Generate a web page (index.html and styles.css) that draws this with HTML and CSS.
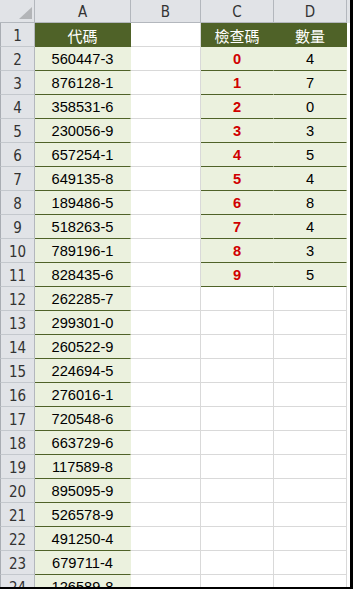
FILE: index.html
```html
<!DOCTYPE html>
<html>
<head>
<meta charset="utf-8">
<link rel="stylesheet" href="styles.css">
</head>
<body>
<div class="sheet">
  <div class="c hd corner"><svg width="34" height="22" viewBox="0 0 34 22"><polygon points="32,7 32,19 19,19" fill="#b3b5b8"/></svg></div>
  <div class="c hd">A</div><div class="c hd">B</div><div class="c hd">C</div><div class="c hd">D</div><div class="c hd pad"></div>

  <div class="c rn">1</div><div class="c a a1">代碼</div><div class="c b"></div><div class="c t t1">檢查碼</div><div class="c t t1">數量</div><div class="c pad"></div>
  <div class="c rn">2</div><div class="c a">560447-3</div><div class="c b"></div><div class="c t red">0</div><div class="c t">4</div><div class="c pad"></div>
  <div class="c rn">3</div><div class="c a">876128-1</div><div class="c b"></div><div class="c t red">1</div><div class="c t">7</div><div class="c pad"></div>
  <div class="c rn">4</div><div class="c a">358531-6</div><div class="c b"></div><div class="c t red">2</div><div class="c t">0</div><div class="c pad"></div>
  <div class="c rn">5</div><div class="c a">230056-9</div><div class="c b"></div><div class="c t red">3</div><div class="c t">3</div><div class="c pad"></div>
  <div class="c rn">6</div><div class="c a">657254-1</div><div class="c b"></div><div class="c t red">4</div><div class="c t">5</div><div class="c pad"></div>
  <div class="c rn">7</div><div class="c a">649135-8</div><div class="c b"></div><div class="c t red">5</div><div class="c t">4</div><div class="c pad"></div>
  <div class="c rn">8</div><div class="c a">189486-5</div><div class="c b"></div><div class="c t red">6</div><div class="c t">8</div><div class="c pad"></div>
  <div class="c rn">9</div><div class="c a">518263-5</div><div class="c b"></div><div class="c t red">7</div><div class="c t">4</div><div class="c pad"></div>
  <div class="c rn">10</div><div class="c a">789196-1</div><div class="c b"></div><div class="c t red">8</div><div class="c t">3</div><div class="c pad"></div>
  <div class="c rn">11</div><div class="c a">828435-6</div><div class="c b"></div><div class="c t red">9</div><div class="c t">5</div><div class="c pad"></div>
  <div class="c rn">12</div><div class="c a">262285-7</div><div class="c b"></div><div class="c b"></div><div class="c b"></div><div class="c pad"></div>
  <div class="c rn">13</div><div class="c a">299301-0</div><div class="c b"></div><div class="c b"></div><div class="c b"></div><div class="c pad"></div>
  <div class="c rn">14</div><div class="c a">260522-9</div><div class="c b"></div><div class="c b"></div><div class="c b"></div><div class="c pad"></div>
  <div class="c rn">15</div><div class="c a">224694-5</div><div class="c b"></div><div class="c b"></div><div class="c b"></div><div class="c pad"></div>
  <div class="c rn">16</div><div class="c a">276016-1</div><div class="c b"></div><div class="c b"></div><div class="c b"></div><div class="c pad"></div>
  <div class="c rn">17</div><div class="c a">720548-6</div><div class="c b"></div><div class="c b"></div><div class="c b"></div><div class="c pad"></div>
  <div class="c rn">18</div><div class="c a">663729-6</div><div class="c b"></div><div class="c b"></div><div class="c b"></div><div class="c pad"></div>
  <div class="c rn">19</div><div class="c a">117589-8</div><div class="c b"></div><div class="c b"></div><div class="c b"></div><div class="c pad"></div>
  <div class="c rn">20</div><div class="c a">895095-9</div><div class="c b"></div><div class="c b"></div><div class="c b"></div><div class="c pad"></div>
  <div class="c rn">21</div><div class="c a">526578-9</div><div class="c b"></div><div class="c b"></div><div class="c b"></div><div class="c pad"></div>
  <div class="c rn">22</div><div class="c a">491250-4</div><div class="c b"></div><div class="c b"></div><div class="c b"></div><div class="c pad"></div>
  <div class="c rn">23</div><div class="c a">679711-4</div><div class="c b"></div><div class="c b"></div><div class="c b"></div><div class="c pad"></div>
  <div class="c rn">24</div><div class="c a">126589-8</div><div class="c b"></div><div class="c b"></div><div class="c b"></div><div class="c pad"></div>
</div>
</body>
</html>
```

FILE: styles.css
```css
html, body {
  margin: 0;
  padding: 0;
  background: #ffffff;
}

.sheet {
  width: 353px;
  height: 589px;
  box-sizing: border-box;
  border-right: 3px solid #000000;
  border-bottom: 2px solid #000000;
  overflow: hidden;
  display: grid;
  grid-template-columns: 35px 96px 70px 73px 73px 3px;
  grid-template-rows: 23px;
  grid-auto-rows: 24px;
  background: #ffffff;
}

.c {
  box-sizing: border-box;
  border-right: 1px solid #d9d9d9;
  border-bottom: 1px solid #d9d9d9;
  display: flex;
  justify-content: center;
  align-items: center;
  overflow: hidden;
  white-space: nowrap;
  font-family: "Liberation Sans", Arial, sans-serif;
  font-size: 14.67px;
  color: #000000;
}

.hd {
  background: #e1e3e7;
  border-right-color: #b3b7bd;
  border-bottom-color: #b3b7bd;
  font-family: "DejaVu Sans Condensed", "DejaVu Sans", sans-serif;
  font-stretch: condensed;
  font-weight: 300;
  font-size: 15px;
  color: #333333;
  align-items: flex-start;
  padding-top: 3px;
  line-height: 19px;
}

.corner {
  padding-top: 0;
  align-items: stretch;
}

.corner svg {
  display: block;
}

.hd.pad {
  border-right: none;
}

.rn {
  background: #e1e3e7;
  border-left: 1px solid #a9adb3;
  border-right-color: #b3b7bd;
  border-bottom-color: #c4c8cd;
  font-family: "DejaVu Sans Condensed", "DejaVu Sans", sans-serif;
  font-stretch: condensed;
  font-weight: 300;
  font-size: 15px;
  color: #333333;
  align-items: flex-start;
  padding-top: 4px;
  line-height: 19px;
}

.a,
.t {
  background: #ebf1de;
  border-right-color: transparent;
  border-bottom-color: #4f6228;
}

.a.a1,
.t.t1 {
  background: #4f6228;
  color: #ffffff;
  font-family: "Noto Sans CJK TC", "Noto Sans CJK SC", sans-serif;
  font-size: 15px;
  padding-top: 2px;
}

.red {
  color: #d00000;
  font-weight: bold;
}

.pad {
  border-right: none;
  border-bottom: none;
}
```
